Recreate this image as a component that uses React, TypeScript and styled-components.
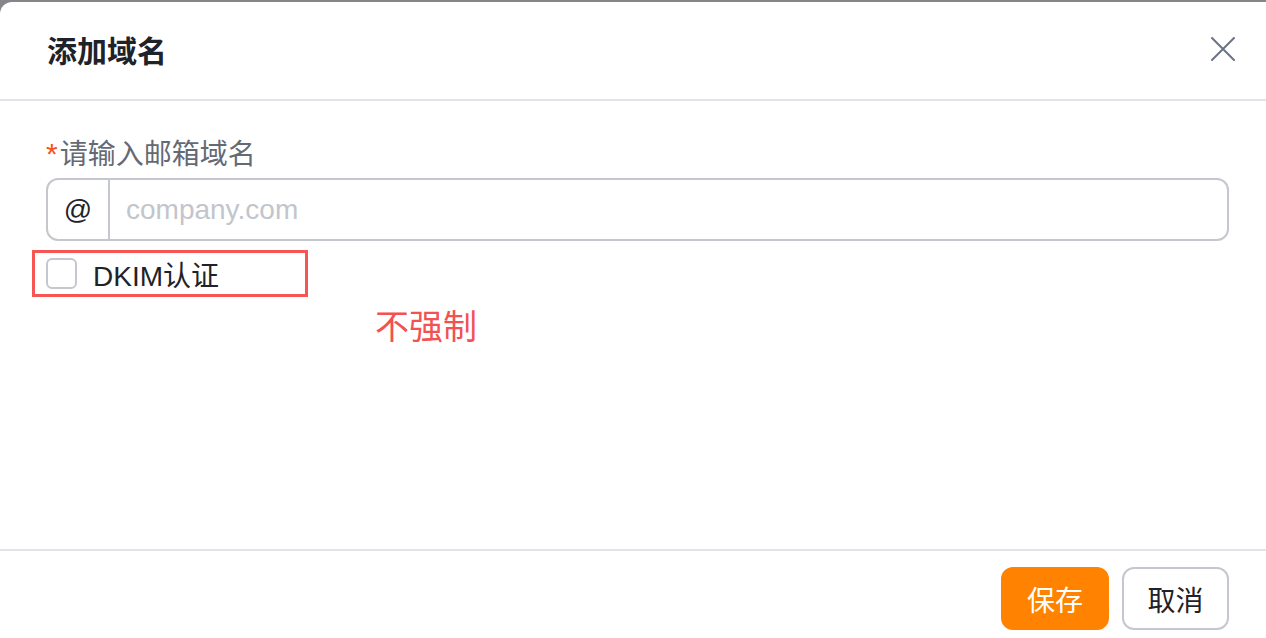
import React, { useState } from "react"
import styled, { createGlobalStyle } from "styled-components"

const GlobalStyle = createGlobalStyle`
  html, body {
    margin: 0;
    padding: 0;
    background: #85868a;
    font-family: "Liberation Sans", "Noto Sans CJK SC", sans-serif;
  }
  * {
    box-sizing: border-box;
  }
`

const Dialog = styled.div`
  margin-top: 2px;
  height: 636px;
  background: #ffffff;
  border-top-left-radius: 12px;
  display: flex;
  flex-direction: column;
`

const Header = styled.div`
  height: 99px;
  flex-shrink: 0;
  display: flex;
  align-items: center;
  justify-content: space-between;
  padding: 0 31px 4px 47px;
  border-bottom: 2px solid #e1e3e8;
`

const Title = styled.h2`
  margin: 0;
  font-size: 30px;
  line-height: 36px;
  font-weight: 700;
  color: #1f2329;
  font-family: "Noto Sans CJK SC", sans-serif;
`

const CloseButton = styled.button`
  width: 24px;
  height: 24px;
  padding: 0;
  border: none;
  background: none;
  cursor: pointer;
  display: flex;
`

const Body = styled.div`
  flex: 1;
  padding: 33px 37px 0 46px;
`

const Label = styled.div`
  font-size: 28px;
  line-height: 36px;
  color: #646a73;
  font-family: "Noto Sans CJK SC", sans-serif;
`

const Star = styled.span`
  color: #f4511e;
  font-size: 30px;
  font-family: "Liberation Sans", sans-serif;
  margin-right: 2px;
`

const InputBox = styled.div`
  margin-top: 6px;
  height: 63px;
  border: 2px solid #c4c7ce;
  border-radius: 12px;
  display: flex;
  align-items: stretch;
`

const Prefix = styled.div`
  width: 62px;
  display: flex;
  align-items: center;
  justify-content: center;
  border-right: 2px solid #c4c7ce;
  font-size: 28px;
  color: #1f2329;
`

const Field = styled.input`
  flex: 1;
  border: none;
  outline: none;
  background: transparent;
  padding: 0 16px;
  font-size: 28px;
  font-family: "Liberation Sans", "Noto Sans CJK SC", sans-serif;
  color: #1f2329;
  border-radius: 0 12px 12px 0;

  &::placeholder {
    color: #c2c5cc;
  }
`

const CheckRow = styled.label`
  margin: 9px 0 0 -14px;
  width: 276px;
  height: 47px;
  border: 3px solid #f75454;
  display: flex;
  align-items: center;
  gap: 16px;
  padding-left: 11px;
  cursor: pointer;
`

const CheckBox = styled.span<{ $checked: boolean }>`
  width: 31px;
  height: 31px;
  border: 2px solid ${({ $checked }) => ($checked ? "#ff8200" : "#c4c7ce")};
  border-radius: 6px;
  background: ${({ $checked }) => ($checked ? "#ff8200" : "#ffffff")};
`

const CheckText = styled.span`
  font-size: 28px;
  color: #1f2329;
  font-family: "Liberation Sans", "Noto Sans CJK SC", sans-serif;
`

const Note = styled.div`
  margin: 6px 0 0 329px;
  font-size: 34px;
  line-height: 44px;
  color: #f25252;
  font-family: "Noto Sans CJK SC", sans-serif;
`

const Footer = styled.div`
  height: 89px;
  flex-shrink: 0;
  border-top: 2px solid #e1e3e8;
  display: flex;
  justify-content: flex-end;
  align-items: flex-start;
  gap: 13px;
  padding: 16px 37px 0 0;
`

const Button = styled.button<{ $primary?: boolean }>`
  width: ${({ $primary }) => ($primary ? "108px" : "107px")};
  height: 63px;
  border-radius: 12px;
  font-size: 28px;
  font-family: "Noto Sans CJK SC", sans-serif;
  cursor: pointer;
  border: 2px solid ${({ $primary }) => ($primary ? "#ff8200" : "#c4c7ce")};
  background: ${({ $primary }) => ($primary ? "#ff8200" : "#ffffff")};
  color: ${({ $primary }) => ($primary ? "#ffffff" : "#1f2329")};
`

const App: React.FC = () => {
  const [domain, setDomain] = useState("")
  const [dkim, setDkim] = useState(false)

  return (
    <>
      <GlobalStyle />
      <Dialog>
        <Header>
          <Title>添加域名</Title>
          <CloseButton aria-label="关闭">
            <svg width="24" height="24" viewBox="0 0 24 24">
              <path
                d="M1 1 L23 23 M23 1 L1 23"
                stroke="#6b7385"
                strokeWidth="2"
                strokeLinecap="round"
              />
            </svg>
          </CloseButton>
        </Header>
        <Body>
          <Label>
            <Star>*</Star>请输入邮箱域名
          </Label>
          <InputBox>
            <Prefix>@</Prefix>
            <Field
              placeholder="company.com"
              value={domain}
              onChange={(e) => setDomain(e.target.value)}
            />
          </InputBox>
          <CheckRow onClick={() => setDkim(!dkim)}>
            <CheckBox $checked={dkim} />
            <CheckText>DKIM认证</CheckText>
          </CheckRow>
          <Note>不强制</Note>
        </Body>
        <Footer>
          <Button $primary>保存</Button>
          <Button>取消</Button>
        </Footer>
      </Dialog>
    </>
  )
}

export default App
